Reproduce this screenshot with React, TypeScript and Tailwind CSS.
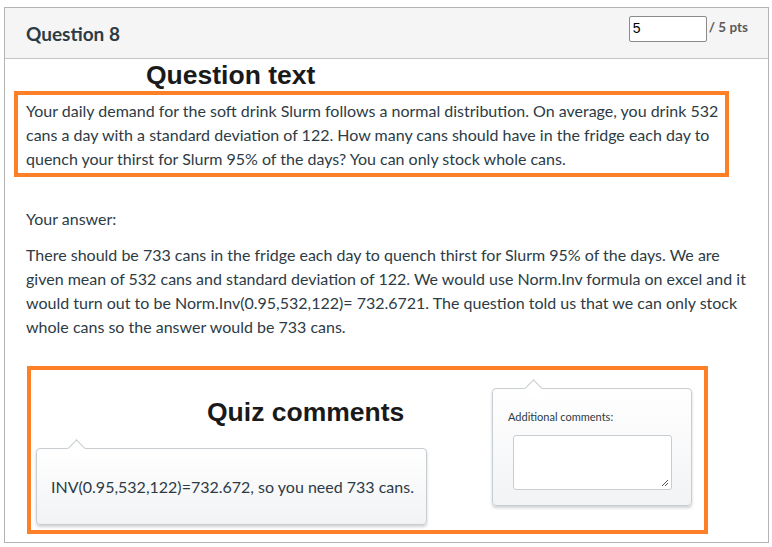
import type { FC } from 'react';

const lato = { fontFamily: 'Lato, "Open Sans", sans-serif' };

const Bubble: FC<{ arrowLeft: number; className?: string; children: React.ReactNode }> = ({ arrowLeft, className, children }) => {
    return (
        <div className={`relative rounded-[4px] border border-[#c7cdd1] bg-gradient-to-b from-white to-[#f2f3f5] shadow-[0_2px_3px_rgba(0,0,0,0.18)] ${className ?? ''}`}>
            <span
                className="absolute top-[-7px] w-[13px] h-[13px] rotate-45 border-l border-t border-[#c7cdd1] bg-white"
                style={{ left: arrowLeft }}
            />
            {children}
        </div>
    );
};

const App: FC = () => {
    return (
        <div className="bg-white w-[772px] h-[547px] pt-[7px] pl-[4px]" style={lato}>
            <div className="w-[765px] h-[536px] border border-[#b4b4b4] flex flex-col">
                <header className="h-[51px] bg-[#f5f5f5] border-b border-[#c4c4c4] flex items-start justify-between shrink-0">
                    <h2 className="text-[19px] font-bold text-[#2d3b45] ml-[21px] mt-[14px] leading-[24px]">Question 8</h2>
                    <div className="flex items-start mt-[8px] mr-[20px]">
                        <div
                            className="w-[78px] h-[26px] border border-[#8a8a8a] rounded-[2px] bg-white text-[14px] text-black pl-[3px] leading-[23px]"
                            style={{ fontFamily: '"Liberation Sans", Arial, sans-serif' }}
                        >
                            5
                        </div>
                        <span className="ml-[2px] mt-[2px] text-[13.5px] leading-[18px] font-bold text-[#5a5a5a]">/ 5 pts</span>
                    </div>
                </header>

                <div className="pl-[9px]">
                    <h1
                        className="h-[32px] leading-[32px] text-[26.5px] font-bold text-[#1a1a1a] pl-[132px]"
                        style={{ fontFamily: '"Liberation Sans", Arial, sans-serif' }}
                    >
                        Question text
                    </h1>
                    <div className="w-[715px] h-[86px] border-[4px] border-[#fd7f28] pl-[8px] pt-[4px] text-[16px] leading-[24px] text-[#2d3b45]">
                        Your daily demand for the soft drink Slurm follows a normal distribution. On average, you drink 532 cans a day with a standard deviation of 122. How many cans should have in the fridge each day to quench your thirst for Slurm 95% of the days? You can only stock whole cans.
                    </div>
                </div>

                <div className="pl-[21px] pr-[12px] text-[16px] leading-[24px] text-[#2d3b45]">
                    <p className="mt-[30px]">Your answer:</p>
                    <p className="mt-[12px]">
                        There should be 733 cans in the fridge each day to quench thirst for Slurm 95% of the days. We are given mean of 532 cans and standard deviation of 122. We would use Norm.Inv formula on excel and it would turn out to be Norm.Inv(0.95,532,122)= 732.6721. The question told us that we can only stock whole cans so the answer would be 733 cans.
                    </p>
                </div>

                <div className="ml-[22px] mt-[27px] w-[681px] h-[168px] border-[4px] border-[#fd7f28] flex">
                    <div className="ml-[5px] w-[391px] flex flex-col">
                        <h1
                            className="mt-[26px] h-[32px] leading-[32px] text-[26.5px] font-bold text-[#1a1a1a] pl-[171px]"
                            style={{ fontFamily: '"Liberation Sans", Arial, sans-serif' }}
                        >
                            Quiz comments
                        </h1>
                        <Bubble arrowLeft={33} className="mt-[20px] h-[77px] flex items-center pl-[14px]">
                            <p className="text-[16px] text-[#2d3b45] mt-[1px]">INV(0.95,532,122)=732.672, so you need 733 cans.</p>
                        </Bubble>
                    </div>
                    <Bubble arrowLeft={34} className="ml-[65px] mt-[18px] w-[200px] h-[118px]">
                        <p className="text-[11px] text-[#2d3b45] mt-[21px] ml-[15px] leading-[14px]">Additional comments:</p>
                        <div className="relative mt-[11px] ml-[20px] w-[159px] h-[55px] border border-[#c7cdd1] rounded-[3px] bg-white">
                            <svg className="absolute right-[2px] bottom-[2px]" width="8" height="8" viewBox="0 0 8 8">
                                <path d="M1 7 L7 1 M4 7 L7 4" stroke="#555" strokeWidth="1" />
                            </svg>
                        </div>
                    </Bubble>
                </div>
            </div>
        </div>
    );
};

export default App;
